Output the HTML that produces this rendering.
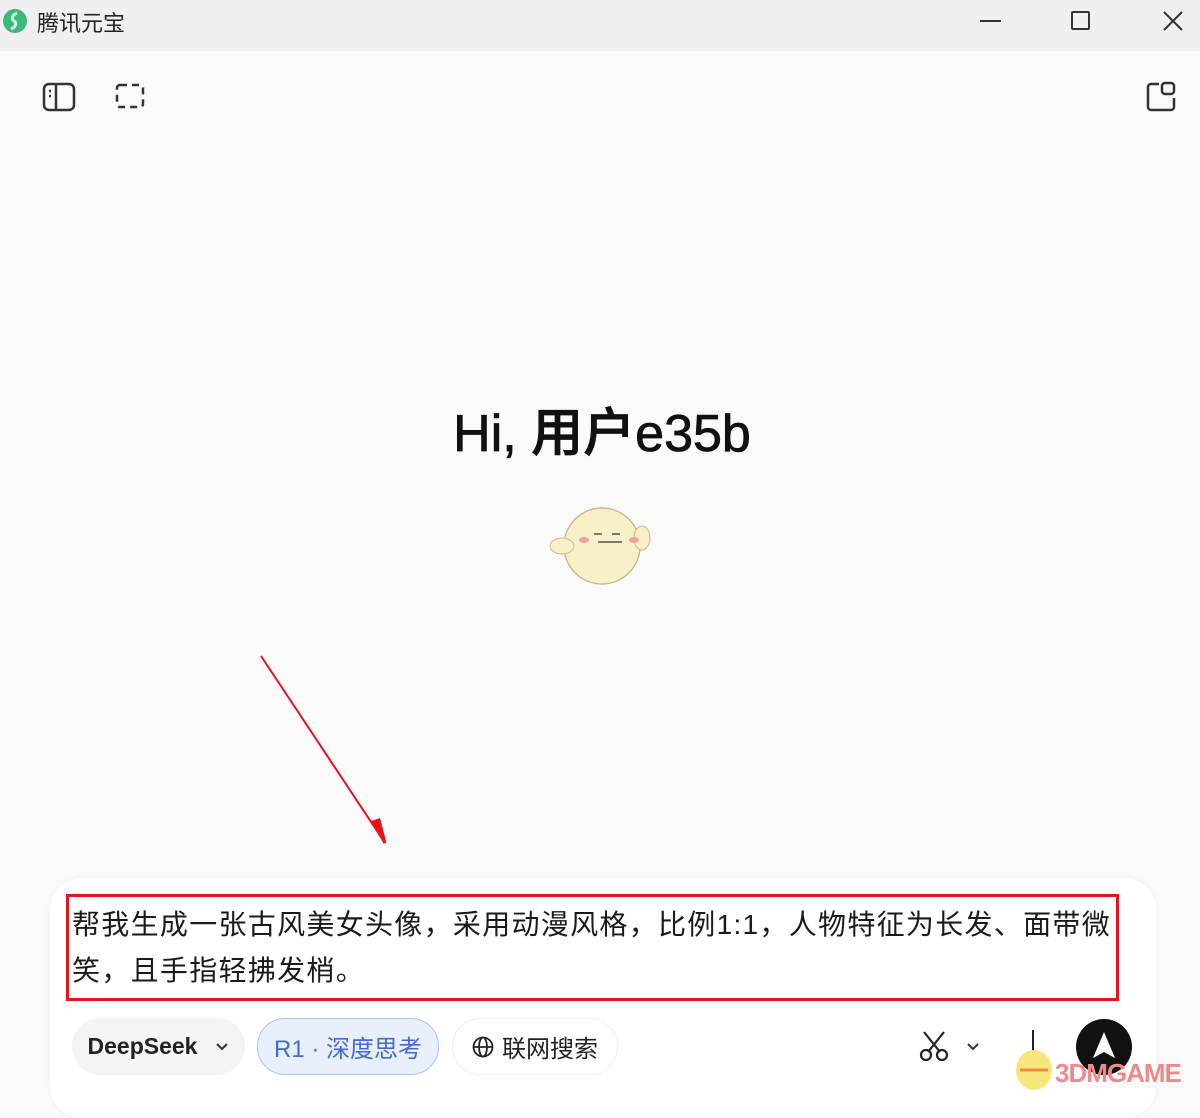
<!DOCTYPE html>
<html><head><meta charset="utf-8"><style>
*{margin:0;padding:0;box-sizing:border-box}
body{width:1200px;height:1091px;overflow:hidden;background:#fafafa;font-family:"Liberation Sans","Noto Sans CJK SC",sans-serif;position:relative;color:#111}
.tb{position:absolute;left:0;top:0;width:1200px;height:51px;background:#f0f0f0}
.abs{position:absolute}
.card{position:absolute;left:50px;top:878px;width:1106px;height:240px;background:#fff;border-radius:32px;box-shadow:0 0 6px rgba(0,0,0,.05)}
.red{position:absolute;left:66px;top:894px;width:1053px;height:107px;border:3px solid #e8121b}
.txt{position:absolute;left:72px;top:902px;font-size:28px;line-height:46px;color:#1a1a1a;width:1060px;letter-spacing:1.3px;white-space:nowrap}
.pill{position:absolute;top:1018px;height:57px;border-radius:28px;font-size:24px;display:flex;align-items:center;justify-content:center}
</style></head><body>
<div class="tb">
<svg class="abs" style="left:2px;top:8px" width="26" height="26" viewBox="0 0 26 26"><circle cx="13" cy="13" r="12" fill="#3cb97a"/><path d="M15 5c-5 2-6 6-3 8s2 6-3 8" stroke="#d8f5e4" stroke-width="3" fill="none"/></svg>
<div class="abs" style="left:37px;top:6px;font-size:22px;color:#222">腾讯元宝</div>
<div class="abs" style="left:980px;top:20px;width:21px;height:2px;background:#333"></div>
<div class="abs" style="left:1071px;top:11px;width:19px;height:19px;border:2px solid #333;border-radius:2px"></div>
<svg class="abs" style="left:1162px;top:10px" width="22" height="22"><path d="M2 2L20 20M20 2L2 20" stroke="#333" stroke-width="2"/></svg>
</div>
<svg class="abs" style="left:42px;top:82px" width="34" height="30"><rect x="2" y="2" width="30" height="26" rx="5" fill="none" stroke="#333" stroke-width="2.5"/><path d="M14 2v26" stroke="#333" stroke-width="2.5"/><path d="M7 9h2M7 14h2" stroke="#333" stroke-width="2.5"/></svg>
<svg class="abs" style="left:114px;top:82px" width="32" height="30"><rect x="3" y="3" width="26" height="22" rx="3" fill="none" stroke="#333" stroke-width="2.5" stroke-dasharray="7 5"/></svg>
<svg class="abs" style="left:1145px;top:80px" width="32" height="32"><path d="M14 4H6a3 3 0 0 0-3 3v20a3 3 0 0 0 3 3h20a3 3 0 0 0 3-3v-9" fill="none" stroke="#333" stroke-width="2.5"/><rect x="17" y="3" width="12" height="11" rx="3" fill="none" stroke="#333" stroke-width="2.5"/></svg>
<div class="abs" style="left:0;width:1200px;top:391px;text-align:center;font-size:52px;font-weight:500;color:#111;padding-left:4px;-webkit-text-stroke:0.8px #111">Hi, 用户e35b</div>
<svg class="abs" style="left:548px;top:502px" width="104" height="88" viewBox="0 0 104 88"><ellipse cx="54" cy="44" rx="38" ry="38" fill="#f7f0c8" stroke="#c8b98a" stroke-width="1.5"/><ellipse cx="14" cy="44" rx="12" ry="8" fill="#f7f0c8" stroke="#c8b98a"/><ellipse cx="94" cy="36" rx="8" ry="12" fill="#f7f0c8" stroke="#c8b98a"/><ellipse cx="36" cy="38" rx="5" ry="3" fill="#f4a0a0"/><ellipse cx="86" cy="38" rx="5" ry="3" fill="#f4a0a0"/><path d="M46 32h8M64 32h8M50 40h24" stroke="#777" stroke-width="2"/></svg>
<svg class="abs" style="left:255px;top:650px" width="140" height="200"><path d="M6 6L128 190" stroke="#e8121b" stroke-width="2"/><path d="M118 172L130 193L124 170Z" fill="#e8121b" stroke="#e8121b" stroke-width="3"/></svg>
<div class="card"></div>
<div class="red"></div>
<div class="txt">帮我生成一张古风美女头像，采用动漫风格，比例1:1，人物特征为长发、面带微<br>笑，且手指轻拂发梢。</div>
<div class="pill" style="left:72px;width:173px;background:#f4f4f4;color:#222;font-weight:bold;font-size:23px">DeepSeek<svg style="margin-left:18px" width="14" height="10"><path d="M2 2l5 5 5-5" stroke="#333" stroke-width="2" fill="none"/></svg></div>
<div class="pill" style="left:257px;width:182px;background:#e9f0fd;border:1.5px solid #aac3f2;color:#4468d4">R1 · 深度思考</div>
<div class="pill" style="left:452px;width:166px;background:#fff;border:1px solid #eee;color:#222"><svg style="margin-right:8px" width="22" height="22"><circle cx="11" cy="11" r="9.5" fill="none" stroke="#222" stroke-width="1.8"/><ellipse cx="11" cy="11" rx="4" ry="9.5" fill="none" stroke="#222" stroke-width="1.8"/><path d="M1.5 11h19" stroke="#222" stroke-width="1.8"/></svg>联网搜索</div>
<svg class="abs" style="left:918px;top:1030px" width="32" height="32"><path d="M6 2l16 20M26 2L10 22" stroke="#222" stroke-width="2.2"/><circle cx="8" cy="25" r="5" fill="none" stroke="#222" stroke-width="2.2"/><circle cx="24" cy="25" r="5" fill="none" stroke="#222" stroke-width="2.2"/></svg>
<svg class="abs" style="left:966px;top:1042px" width="14" height="10"><path d="M2 2l5 5 5-5" stroke="#333" stroke-width="2" fill="none"/></svg>
<div class="abs" style="left:1032px;top:1030px;width:2px;height:30px;background:#222"></div>
<svg class="abs" style="left:1010px;top:1040px" width="50" height="51"><ellipse cx="24" cy="30" rx="18" ry="20" fill="#f5e77a"/><path d="M10 30h28" stroke="#e84" stroke-width="3"/></svg>
<div class="abs" style="left:1076px;top:1019px;width:56px;height:56px;border-radius:50%;background:#111"></div>
<svg class="abs" style="left:1090px;top:1030px" width="28" height="32"><path d="M14 2L3 28l11-6 11 6Z" fill="#fff"/></svg>
<div class="abs" style="left:1055px;top:1058px;font-size:26px;font-weight:bold;color:#f08a8a;letter-spacing:-1px">3DMGAME</div>
</body></html>
